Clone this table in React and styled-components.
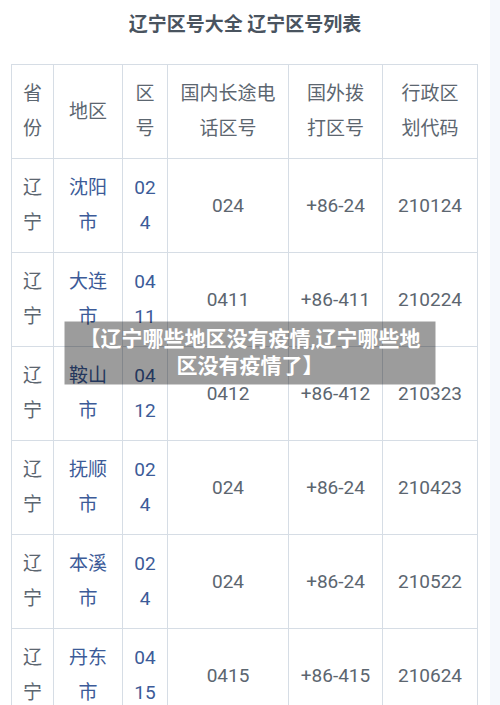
import React from "react";
import styled, { createGlobalStyle } from "styled-components";

const GlobalStyle = createGlobalStyle`
  html, body {
    margin: 0;
    padding: 0;
    background: #f5f8fc;
  }
  body {
    font-family: Roboto, "Noto Sans CJK SC", sans-serif;
  }
`;

const header = ["省份", "地区", "区号", "国内长途电话区号", "国外拨打区号", "行政区划代码"];

const rows = [
  { city: "沈阳市", code: "024", local: "024", intl: "+86-24", admin: "210124" },
  { city: "大连市", code: "0411", local: "0411", intl: "+86-411", admin: "210224" },
  { city: "鞍山市", code: "0412", local: "0412", intl: "+86-412", admin: "210323" },
  { city: "抚顺市", code: "024", local: "024", intl: "+86-24", admin: "210423" },
  { city: "本溪市", code: "024", local: "024", intl: "+86-24", admin: "210522" },
  { city: "丹东市", code: "0415", local: "0415", intl: "+86-415", admin: "210624" },
];

const widths = [42, 69, 45, 121, 94, 95];

const App = () => {
  return (
    <Page>
      <GlobalStyle />
      <Article>
        <Title>辽宁区号大全 辽宁区号列表</Title>
        <Table>
          <colgroup>
            {widths.map((w, i) => (
              <col key={i} style={{ width: w }} />
            ))}
          </colgroup>
          <tbody>
            <tr>
              {header.map((h) => (
                <Cell key={h}>{h}</Cell>
              ))}
            </tr>
            {rows.map((r) => (
              <tr key={r.admin}>
                <Cell>辽宁</Cell>
                <Cell $link>{r.city}</Cell>
                <Cell $link>{r.code}</Cell>
                <Cell>{r.local}</Cell>
                <Cell>{r.intl}</Cell>
                <Cell>{r.admin}</Cell>
              </tr>
            ))}
          </tbody>
        </Table>
      </Article>
      <Banner>【辽宁哪些地区没有疫情,辽宁哪些地区没有疫情了】</Banner>
    </Page>
  );
};

const Page = styled.div`
  position: relative;
  width: 500px;
  height: 705px;
  overflow: hidden;
`;

const Article = styled.div`
  width: 490px;
  height: 705px;
  background: #ffffff;
  padding: 0 0 0 11px;
  box-sizing: border-box;
`;

const Title = styled.h1`
  margin: 0 0 14px -11px;
  width: 490px;
  height: 50px;
  line-height: 50px;
  text-align: center;
  font-size: 19px;
  font-weight: 700;
  color: #4a545f;
`;

const Table = styled.table`
  table-layout: fixed;
  width: 467px;
  border-collapse: collapse;
  border: 1px solid #d6dde5;
`;

const Cell = styled.td`
  border: 1px solid #d6dde5;
  padding: 11px 10px 12px;
  line-height: 35px;
  font-size: 19px;
  text-align: center;
  word-break: break-all;
  color: ${(p) => (p.$link ? "#3c5b98" : "#5c6670")};
`;

const Banner = styled.div`
  position: absolute;
  left: 50%;
  top: 50%;
  transform: translate(-50%, -50%);
  width: 371px;
  box-sizing: border-box;
  padding: 4px 12px 5px;
  background: rgba(0, 0, 0, 0.39);
  color: #ffffff;
  font-size: 21px;
  font-weight: 700;
  line-height: 27px;
  text-align: center;
`;

export default App;
